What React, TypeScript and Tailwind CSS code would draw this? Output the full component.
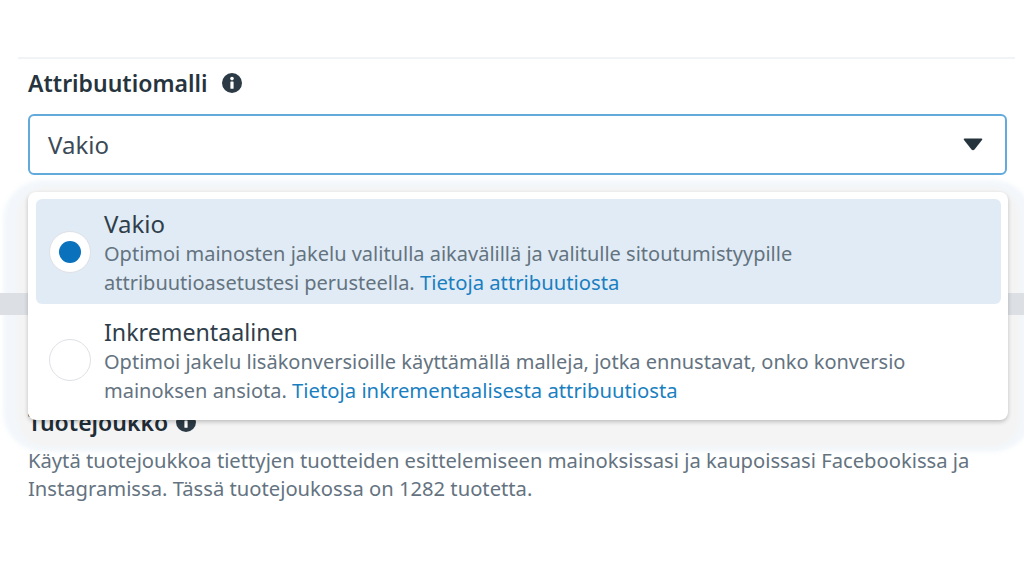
import React from "react";

function InfoIcon() {
  return (
    <svg width="20" height="20" viewBox="0 0 20 20" className="shrink-0">
      <circle cx="10" cy="10" r="10" fill="#2b3a44" />
      <rect x="8.4" y="8.4" width="3.2" height="7.4" rx="0.6" fill="#ffffff" />
      <circle cx="10" cy="5.6" r="1.8" fill="#ffffff" />
    </svg>
  );
}

function Option({
  selected,
  title,
  line1,
  line2,
  link,
}: {
  selected?: boolean;
  title: string;
  line1: string;
  line2: string;
  link: string;
}) {
  return (
    <div className={`flex items-center rounded-[6px] pl-[13px] ${selected ? "h-[105px] bg-[#e0ebf5]" : "h-[112px] bg-white"}`}>
      <div className="flex h-[42px] w-[42px] shrink-0 items-center justify-center rounded-full border border-[#dfe1e6] bg-white">
        {selected && <div className="h-[22px] w-[22px] rounded-full bg-[#0a72bd]" />}
      </div>
      <div className="ml-[13px] mt-[3px]">
        <div className={`leading-[28px] text-[#2f3e4a] ${selected ? "text-[24px]" : "text-[23.2px]"}`}>{title}</div>
        <div className="mt-[2px] text-[20px] leading-[28px] text-[#64737f]">{line1}</div>
        <div className="text-[20px] leading-[28px] text-[#64737f]">
          {line2} <span className="text-[20.25px] text-[#1a7fc1]">{link}</span>
        </div>
      </div>
    </div>
  );
}

export default function App() {
  return (
    <div className="relative h-[576px] w-[1024px] overflow-hidden bg-white font-['Noto_Sans',sans-serif]">
      <div className="pt-[57px] pl-[18px] pr-[9px]">
        <div className="h-[2px] bg-[#f1f4f7]" />
        <div className="pl-[10px] pr-[8px]">
          <div className="mt-[10px] flex h-[28px] items-center">
            <span className="text-[23px] font-semibold text-[#26343e]">Attribuutiomalli</span>
            <span className="ml-[15px]">
              <InfoIcon />
            </span>
          </div>
          <div className="mt-[17px] flex h-[61px] items-center justify-between rounded-[6px] border-2 border-[#62a9dc] bg-white pl-[18px] pr-[22px]">
            <span className="text-[24px] text-[#3b4a56]">Vakio</span>
            <svg width="20" height="13" viewBox="0 0 20 13">
              <path d="M1.5 0.5 H18.5 Q20 0.5 19 2 L11.5 11.5 Q10 13 8.5 11.5 L1 2 Q0 0.5 1.5 0.5 Z" fill="#26343e" />
            </svg>
          </div>
        </div>
      </div>

      {/* washed-out backdrop behind the open menu */}
      <div className="absolute left-[3px] top-[180px] h-[272px] w-[1030px] rounded-[40px] bg-[#f3f7fb] blur-[2px]">
        <div className="absolute left-[14px] right-[13px] top-[7px] bottom-[5px] rounded-[30px] bg-[#f4f4f4]" />
      </div>
      <div className="absolute left-0 top-[293px] h-[22px] w-[1024px] bg-[#dce0e5]" />

      {/* section under the menu */}
      <div className="absolute left-[28px] top-[408px] w-[960px]">
        <div className="flex items-center">
          <span className="text-[23px] font-semibold leading-[28px] text-[#1f2d37]">Tuotejoukko</span>
          <span className="ml-[8px]">
            <InfoIcon />
          </span>
        </div>
        <p className="mt-[10px] text-[20.2px] leading-[28px] text-[#64737f]">
          Käytä tuotejoukkoa tiettyjen tuotteiden esittelemiseen mainoksissasi ja kaupoissasi Facebookissa ja
          <br />
          Instagramissa. Tässä tuotejoukossa on 1282 tuotetta.
        </p>
      </div>

      {/* open menu */}
      <div className="absolute left-[28px] top-[192px] h-[228px] w-[980px] rounded-[8px] bg-white pt-[7px] pl-[8px] pr-[7px] shadow-[0_2px_4px_rgba(0,0,0,0.22)]">
        <Option
          selected
          title="Vakio"
          line1="Optimoi mainosten jakelu valitulla aikavälillä ja valitulle sitoutumistyypille"
          line2="attribuutioasetustesi perusteella."
          link="Tietoja attribuutiosta"
        />
        <Option
          title="Inkrementaalinen"
          line1="Optimoi jakelu lisäkonversioille käyttämällä malleja, jotka ennustavat, onko konversio"
          line2="mainoksen ansiota."
          link="Tietoja inkrementaalisesta attribuutiosta"
        />
      </div>
    </div>
  );
}
